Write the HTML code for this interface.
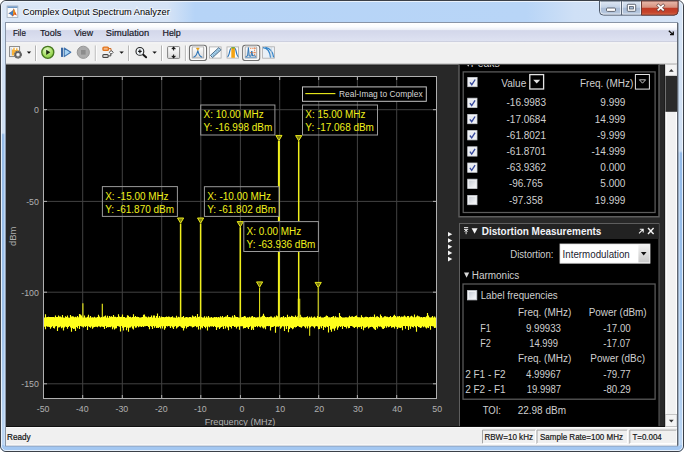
<!DOCTYPE html>
<html><head><meta charset="utf-8"><title>Complex Output Spectrum Analyzer</title>
<style>html,body{margin:0;padding:0;background:#fff;}body{width:684px;height:452px;overflow:hidden;font-family:"Liberation Sans",sans-serif;}svg{display:block;}</style></head>
<body>
<svg width="684" height="452" viewBox="0 0 684 452" font-family="Liberation Sans, sans-serif">
<defs>
<linearGradient id="gTitle" x1="0" x2="1" y1="0" y2="0">
<stop offset="0" stop-color="#dde8f7"/><stop offset="0.245" stop-color="#d5e3f6"/><stop offset="0.285" stop-color="#b6d4f7"/>
<stop offset="0.77" stop-color="#b8d5f7"/><stop offset="0.84" stop-color="#cfe0f6"/><stop offset="1" stop-color="#d6e4f6"/>
</linearGradient>
<linearGradient id="gLeft" x1="0" x2="0" y1="0" y2="1">
<stop offset="0" stop-color="#d9e6f6"/><stop offset="0.258" stop-color="#cfdff3"/><stop offset="0.262" stop-color="#94bbe9"/>
<stop offset="0.7" stop-color="#9cc1eb"/><stop offset="1" stop-color="#bfd8f4"/>
</linearGradient>
<linearGradient id="gRight" x1="0" x2="0" y1="0" y2="1">
<stop offset="0" stop-color="#d6e4f6"/><stop offset="0.30" stop-color="#cfdff3"/><stop offset="0.305" stop-color="#94bbe9"/>
<stop offset="0.7" stop-color="#9cc1eb"/><stop offset="1" stop-color="#bfd8f4"/>
</linearGradient>
<linearGradient id="gMenu" x1="0" x2="0" y1="0" y2="1">
<stop offset="0" stop-color="#ffffff"/><stop offset="0.2" stop-color="#fbfcfe"/><stop offset="0.36" stop-color="#eceff7"/><stop offset="0.40" stop-color="#d3d7ea"/><stop offset="1" stop-color="#dfe3f2"/>
</linearGradient>
<linearGradient id="gBtn" x1="0" x2="0" y1="0" y2="1">
<stop offset="0" stop-color="#dfe8f3"/><stop offset="0.45" stop-color="#c3d2e6"/><stop offset="0.5" stop-color="#a9bcd6"/><stop offset="1" stop-color="#bccce2"/>
</linearGradient>
<linearGradient id="gClose" x1="0" x2="0" y1="0" y2="1">
<stop offset="0" stop-color="#e9bbae"/><stop offset="0.45" stop-color="#d6907e"/><stop offset="0.5" stop-color="#c03a26"/><stop offset="0.8" stop-color="#c5442c"/><stop offset="1" stop-color="#d66c4c"/>
</linearGradient>
<radialGradient id="gPlay" cx="0.4" cy="0.3" r="0.8">
<stop offset="0" stop-color="#e2f8c6"/><stop offset="0.6" stop-color="#a4dd60"/><stop offset="1" stop-color="#78be3a"/>
</radialGradient>
<linearGradient id="gIco" x1="0" x2="0" y1="0" y2="1">
<stop offset="0" stop-color="#ffffff"/><stop offset="1" stop-color="#dcdcdc"/>
</linearGradient>
<linearGradient id="gCombo" x1="0" x2="0" y1="0" y2="1">
<stop offset="0" stop-color="#f2f2f2"/><stop offset="1" stop-color="#c9c9c9"/>
</linearGradient>
<linearGradient id="gChk" x1="0" x2="1" y1="0" y2="1">
<stop offset="0" stop-color="#c9ced6"/><stop offset="1" stop-color="#f6f7f9"/>
</linearGradient>
<clipPath id="cWin"><rect x="0.5" y="0.5" width="683" height="451" rx="5.5"/></clipPath>
<clipPath id="cAx"><rect x="43" y="76" width="394" height="323"/></clipPath>
<clipPath id="cPk"><rect x="460" y="65" width="198" height="10"/></clipPath>
</defs>
<rect width="684" height="452" fill="#ffffff"/>
<g clip-path="url(#cWin)">
<rect width="684" height="452" fill="url(#gTitle)"/>
<rect x="0" y="22" width="6" height="430" fill="url(#gLeft)"/>
<rect x="678" y="22" width="6" height="430" fill="url(#gRight)"/>
<rect x="0" y="445" width="684" height="7" fill="#a3c7f1"/>
<rect x="678.2" y="22" width="1.7" height="424" fill="#d2e6fb" fill-opacity="0.75"/>
<rect x="3.9" y="22" width="1.3" height="424" fill="#d2e6fb" fill-opacity="0.6"/>
</g>
<rect x="0.5" y="0.5" width="683" height="451" rx="5.5" fill="none" stroke="#3b4048"/>
<rect x="1.5" y="1.5" width="681" height="449" rx="4.5" fill="none" stroke="#f2f7fd" stroke-opacity="0.85"/>
<rect x="5.5" y="22.5" width="672" height="423.4" fill="#f0f0f0" stroke="#7f8c9f" stroke-opacity="0.9"/>
<rect x="7.1" y="6.0" width="10.7" height="11.4" fill="#fbfbfb" stroke="#a3afbf" stroke-width="0.9"/>
<rect x="7.5" y="6.3" width="9.9" height="1.7" fill="#7199c6"/>
<path d="M8.4 13.4 L12.4 11 L13.8 8.4 L15.1 11.4 L16.9 15.6 L14.6 14.6 L12.6 16.6 L11 14.6 Z" fill="#d6501c"/>
<path d="M8.4 13.4 L12.4 11 L13.8 8.4 L13.1 13.8 L12.4 16.2 L11 14.6 Z" fill="#3f7fc4"/>
<path d="M13.8 8.4 L14.9 11.6 L14 15 L13.1 13.8 Z" fill="#f3a21a"/>
<text x="22.8" y="15.0" font-size="9.7" fill="#000" textLength="147" lengthAdjust="spacingAndGlyphs" stroke="#ffffff" stroke-opacity="0.45" stroke-width="2.2" style="paint-order:stroke">Complex Output Spectrum Analyzer</text>
<path d="M599.5 1 V11.2 Q599.5 15.1 603.5 15.1 H674 Q678 15.1 678 11.2 V1 Z" fill="url(#gBtn)" stroke="#4d5869"/>
<path d="M641.5 1 V15.1 H674 Q678 15.1 678 11.2 V1 Z" fill="url(#gClose)" stroke="#6e3a34"/>
<path d="M621.5 1 V15.1" stroke="#5b6778" fill="none"/>
<path d="M600.5 1.5 V11.2 Q600.5 14.1 603.5 14.1 H620.5 V1.5 M622.5 1.5 V14.1 H640.5 V1.5" stroke="#ffffff" stroke-opacity="0.6" fill="none"/>
<rect x="606.5" y="8" width="9" height="3.4" rx="1" fill="#ffffff" stroke="#525a66" stroke-width="0.9"/>
<rect x="627.3" y="4.3" width="8.4" height="7" rx="0.8" fill="#ffffff" stroke="#525a66" stroke-width="0.9"/>
<rect x="629.6" y="6.6" width="3.8" height="2.4" fill="#a9bcd6" stroke="#525a66" stroke-width="0.8"/>
<path d="M658.3 5.5 L663.1 9.9 M663.1 5.5 L658.3 9.9" stroke="#5c4444" stroke-opacity="0.8" stroke-width="3.1" stroke-linecap="square" fill="none"/>
<path d="M658.3 5.5 L663.1 9.9 M663.1 5.5 L658.3 9.9" stroke="#ffffff" stroke-width="1.7" stroke-linecap="square" fill="none"/>
<rect x="6" y="23" width="672" height="19" fill="url(#gMenu)"/>
<rect x="6" y="41.6" width="672" height="0.9" fill="#b3b7c6"/>
<text x="13" y="36.4" font-size="9.8" fill="#151525" textLength="12.8" lengthAdjust="spacingAndGlyphs" stroke="#151525" stroke-width="0.18">File</text>
<text x="40" y="36.4" font-size="9.8" fill="#151525" textLength="21.3" lengthAdjust="spacingAndGlyphs" stroke="#151525" stroke-width="0.18">Tools</text>
<text x="74.2" y="36.4" font-size="9.8" fill="#151525" textLength="18.8" lengthAdjust="spacingAndGlyphs" stroke="#151525" stroke-width="0.18">View</text>
<text x="105.8" y="36.4" font-size="9.8" fill="#151525" textLength="43.4" lengthAdjust="spacingAndGlyphs" stroke="#151525" stroke-width="0.18">Simulation</text>
<text x="162.5" y="36.4" font-size="9.8" fill="#151525" textLength="18.3" lengthAdjust="spacingAndGlyphs" stroke="#151525" stroke-width="0.18">Help</text>
<path d="M668.8 30.8 L672.6 34.2 M673.3 31.4 V34.6 H670" stroke="#111" stroke-width="1.3" fill="none"/>
<rect x="6" y="42.5" width="672" height="22" fill="#f0f0f0"/>
<rect x="6" y="42.3" width="672" height="1" fill="#fbfbfb"/>
<path d="M35.5 45.5 V61" stroke="#b2b2b2" stroke-width="1"/>
<path d="M36.5 45.5 V61" stroke="#ffffff" stroke-width="1"/>
<path d="M95.3 45.5 V61" stroke="#b2b2b2" stroke-width="1"/>
<path d="M96.3 45.5 V61" stroke="#ffffff" stroke-width="1"/>
<path d="M128.6 45.5 V61" stroke="#b2b2b2" stroke-width="1"/>
<path d="M129.6 45.5 V61" stroke="#ffffff" stroke-width="1"/>
<path d="M161.5 45.5 V61" stroke="#b2b2b2" stroke-width="1"/>
<path d="M162.5 45.5 V61" stroke="#ffffff" stroke-width="1"/>
<path d="M185.4 45.5 V61" stroke="#b2b2b2" stroke-width="1"/>
<path d="M186.4 45.5 V61" stroke="#ffffff" stroke-width="1"/>
<rect x="9.6" y="46.6" width="10" height="10" fill="#fafafa" stroke="#7c7c7c" stroke-width="0.9"/><path d="M11.2 48 V55.6" stroke="#a9c4e4" stroke-width="0.8"/>
<path d="M12.6 55.6 V49.4 M14 55.6 V47.8 M15.4 55.6 V50 M16.8 55.6 V48.2 M18 55.6 V50" stroke="#f7b23a" stroke-width="1.4"/>
<circle cx="18" cy="54.7" r="3.4" fill="#e2e2e2" stroke="#6a6a6a" stroke-width="1.2" stroke-dasharray="1.7 0.45"/><circle cx="18" cy="54.7" r="2.5" fill="#dcdcdc" stroke="#5c5c5c" stroke-width="1.3"/>
<circle cx="18" cy="54.7" r="0.9" fill="#ffffff"/>
<path d="M26.8 51.4 H31.2 L29 53.8 Z" fill="#111"/>
<circle cx="47.8" cy="52.3" r="6" fill="url(#gPlay)" stroke="#46781f" stroke-width="1.35"/>
<path d="M46.2 49.7 L50.3 52.3 L46.2 54.9 Z" fill="#1d2a12"/>
<rect x="61" y="47.7" width="2" height="9.2" fill="#3b69a3"/>
<path d="M64.2 48 L70.8 52.3 L64.2 56.6 Z" fill="#a6d3f3" stroke="#3d72ae" stroke-width="1.1" stroke-linejoin="round"/>
<circle cx="83.3" cy="52.3" r="6.1" fill="#ababab" stroke="#979797" stroke-width="1"/>
<rect x="81" y="50" width="4.6" height="4.6" fill="#8c8c8c"/>
<path d="M108.6 48.6 H111 V50.8" stroke="#c8641e" stroke-width="1" fill="none"/>
<path d="M108.4 55.9 H110.8 V54" stroke="#444" stroke-width="1" fill="none"/>
<rect x="103" y="47.1" width="5.4" height="3.3" rx="1" fill="#f4b886" stroke="#e3751c" stroke-width="1.4"/>
<rect x="102.8" y="54.6" width="5.4" height="2.8" rx="1" fill="#ffffff" stroke="#444" stroke-width="1.1"/>
<path d="M109.4 52.3 L110.6 50.9 H112 L113.2 52.3 L112 53.7 H110.6 Z" fill="#ffffff" stroke="#4a4a4a" stroke-width="0.9"/>
<path d="M119.39999999999999 51.4 H123.8 L121.6 53.8 Z" fill="#111"/>
<path d="M143 54.5 L146.1 57.3" stroke="#181818" stroke-width="2" stroke-linecap="round"/>
<circle cx="139.9" cy="51.4" r="3.9" fill="#f1f6fa" stroke="#222" stroke-width="1.1"/>
<path d="M138.1 51.4 H141.7 M139.9 49.6 V53.2" stroke="#181818" stroke-width="1.2"/>
<path d="M152.4 51.4 H156.79999999999998 L154.6 53.8 Z" fill="#111"/>
<rect x="167.6" y="46.6" width="12" height="11.8" rx="0.8" fill="url(#gIco)" stroke="#828282" stroke-width="1"/>
<path d="M173.6 47.3 V50.4 M171.8 49.2 L173.6 47.3 L175.4 49.2 M173.6 57.7 V54.6 M171.8 55.8 L173.6 57.7 L175.4 55.8" stroke="#151515" stroke-width="1.05" fill="none"/>
<rect x="189.5" y="45.2" width="17" height="15.3" rx="2.6" fill="#e9e9e9" stroke="#6f6f6f" stroke-width="1.1"/>
<rect x="190.6" y="46.3" width="14.8" height="13.1" rx="1.8" fill="none" stroke="#ffffff" stroke-width="0.9"/>
<rect x="192.3" y="46.9" width="11.3" height="11" fill="url(#gIco)" stroke="#a9a9a9" stroke-width="0.8"/>
<path d="M193.4 57.2 C196.6 56.4 197.2 53 197.8 50.4 C198.4 53 199 56.4 202.2 57.2" stroke="#2f76b8" stroke-width="1.05" fill="none"/>
<path d="M196.3 48 H199.3 L197.8 50.4 Z" fill="#f2aa14" stroke="#c98408" stroke-width="0.4"/>
<rect x="209.5" y="46.9" width="11.6" height="11.2" fill="#fbfbfb" stroke="#acacac" stroke-width="0.8"/>
<path d="M210.4 55.4 L218.8 47.6 L221 49.8 L212.6 57.6 Z" fill="#a5d2ee" stroke="#41617e" stroke-width="0.9"/>
<path d="M213.2 54.8 l0.9 0.9 M214.8 53.3 l0.9 0.9 M216.4 51.8 l0.9 0.9 M218 50.3 l0.9 0.9" stroke="#41617e" stroke-width="0.6"/>
<rect x="227" y="46.9" width="11.6" height="11.2" fill="#fbfbfb" stroke="#acacac" stroke-width="0.8"/>
<path d="M227.4 56.6 C229.6 56.6 229.4 48.6 231 48.6 M238.4 56.6 C236.2 56.6 236.4 48.6 235 48.6" stroke="#2f76b8" stroke-width="1.2" fill="none"/>
<rect x="231.3" y="47.6" width="3.6" height="10.2" fill="#f5a413"/>
<rect x="231.3" y="47.2" width="3.6" height="1.2" fill="#5aa33a"/>
<rect x="242.7" y="45.2" width="17" height="15.3" rx="2.6" fill="#e9e9e9" stroke="#6f6f6f" stroke-width="1.1"/>
<rect x="243.79999999999998" y="46.3" width="14.8" height="13.1" rx="1.8" fill="none" stroke="#ffffff" stroke-width="0.9"/>
<rect x="245.2" y="46.9" width="11.2" height="11" fill="url(#gIco)" stroke="#a9a9a9" stroke-width="0.8"/>
<path d="M245.4 57.6 H256.4" stroke="#7da8cf" stroke-width="1"/>
<path d="M245.6 56.6 L247.6 56 L248.4 47.6 L249.2 56 L251 56.2 L251.8 51 L252.6 56 L254 55.6 L256 56.4" stroke="#2f76b8" stroke-width="1" fill="none"/>
<path d="M250 48.4 H256 M250 52.6 H256 M254.6 47.4 V56" stroke="#e8763a" stroke-width="0.8" stroke-dasharray="1.4 0.8" fill="none"/>
<rect x="262.6" y="46.8" width="11.8" height="11.4" fill="#e9f0f7" stroke="#acacac" stroke-width="0.8"/>
<path d="M263 47.6 C268 48 270 52 270.6 57.6 M265.4 47.4 C270.8 48.4 273 52.4 273.6 57.4" stroke="#2f82c8" stroke-width="1.3" fill="none"/>
<path d="M271.2 47 V57.8" stroke="#c7cfd8" stroke-width="0.8"/>
<rect x="6" y="64.6" width="672" height="362.4" fill="#282828"/>
<rect x="6" y="64.4" width="672" height="1" fill="#1a1a1a"/>
<rect x="6" y="63.2" width="672" height="1.1" fill="#c6c6c6"/>
<rect x="43.5" y="76.5" width="393.0" height="322.0" fill="#000000"/>
<path d="M82.7 76.5 V398.5" stroke="#424242" stroke-width="1"/>
<path d="M122.3 76.5 V398.5" stroke="#424242" stroke-width="1"/>
<path d="M161.7 76.5 V398.5" stroke="#424242" stroke-width="1"/>
<path d="M200.8 76.5 V398.5" stroke="#424242" stroke-width="1"/>
<path d="M240.4 76.5 V398.5" stroke="#424242" stroke-width="1"/>
<path d="M279.7 76.5 V398.5" stroke="#424242" stroke-width="1"/>
<path d="M318.7 76.5 V398.5" stroke="#424242" stroke-width="1"/>
<path d="M357.4 76.5 V398.5" stroke="#424242" stroke-width="1"/>
<path d="M396.7 76.5 V398.5" stroke="#424242" stroke-width="1"/>
<path d="M43.5 109.7 H436.5" stroke="#424242" stroke-width="1"/>
<path d="M43.5 201.4 H436.5" stroke="#424242" stroke-width="1"/>
<path d="M43.5 292.2 H436.5" stroke="#424242" stroke-width="1"/>
<path d="M43.5 383.8 H436.5" stroke="#424242" stroke-width="1"/>
<path d="M82.7 398.5 v-3.5 M82.7 76.5 v3.5 M122.3 398.5 v-3.5 M122.3 76.5 v3.5 M161.7 398.5 v-3.5 M161.7 76.5 v3.5 M200.8 398.5 v-3.5 M200.8 76.5 v3.5 M240.4 398.5 v-3.5 M240.4 76.5 v3.5 M279.7 398.5 v-3.5 M279.7 76.5 v3.5 M318.7 398.5 v-3.5 M318.7 76.5 v3.5 M357.4 398.5 v-3.5 M357.4 76.5 v3.5 M396.7 398.5 v-3.5 M396.7 76.5 v3.5 M43.5 109.7 h3.5 M436.5 109.7 h-3.5 M43.5 201.4 h3.5 M436.5 201.4 h-3.5 M43.5 292.2 h3.5 M436.5 292.2 h-3.5 M43.5 383.8 h3.5 M436.5 383.8 h-3.5" stroke="#b0b0b0" stroke-width="1" fill="none"/>
<g clip-path="url(#cAx)">
<path d="M44.5 317.4V326.8M45.5 314.3V329.3M46.5 317.2V326.2M47.5 317.1V326.7M48.5 316.7V326.7M49.5 317.1V327.0M50.5 316.9V328.8M51.5 317.0V327.2M52.5 317.0V326.3M53.5 317.1V328.0M54.5 317.2V328.4M55.5 315.4V326.4M56.5 317.1V326.0M57.5 316.9V331.0M58.5 315.6V327.4M59.5 316.4V327.2M60.5 316.5V326.6M61.5 317.2V328.2M62.5 315.0V327.5M63.5 317.4V330.4M64.5 317.7V327.6M65.5 316.3V326.6M66.5 317.1V326.9M67.5 315.5V328.7M68.5 317.6V327.1M69.5 317.7V326.1M70.5 315.1V327.6M71.5 316.4V331.8M72.5 316.3V328.1M73.5 316.4V329.1M74.5 317.2V328.7M75.5 316.8V331.0M76.5 317.2V326.9M77.5 316.1V328.2M78.5 317.2V326.0M79.5 314.1V329.1M80.5 314.5V326.1M81.5 315.4V326.4M82.5 317.2V326.7M83.5 317.5V327.4M84.5 315.5V326.2M85.5 317.6V327.1M86.5 317.4V326.0M87.5 316.7V329.9M88.5 314.8V326.2M89.5 317.6V327.0M90.5 315.9V327.8M91.5 317.6V326.6M92.5 317.3V328.7M93.5 317.4V327.4M94.5 316.8V326.9M95.5 317.4V326.7M96.5 317.5V326.8M97.5 317.1V327.2M98.5 314.7V326.3M99.5 316.6V326.6M100.5 317.5V327.2M101.5 316.9V326.6M102.5 316.8V326.8M103.5 316.7V326.9M104.5 316.3V329.1M105.5 315.6V326.0M106.5 317.5V328.0M107.5 315.8V326.9M108.5 317.7V327.3M109.5 315.9V327.0M110.5 316.7V327.2M111.5 316.3V326.5M112.5 317.0V329.2M113.5 315.1V327.4M114.5 316.8V329.4M115.5 316.7V328.5M116.5 317.3V328.3M117.5 316.9V326.1M118.5 314.2V326.3M119.5 316.4V326.8M120.5 316.9V331.5M121.5 316.7V326.1M122.5 314.6V327.8M123.5 317.0V330.6M124.5 316.9V327.2M125.5 317.7V326.9M126.5 317.5V330.2M127.5 315.3V327.7M128.5 315.7V331.7M129.5 316.9V327.7M130.5 316.7V327.4M131.5 317.5V326.4M132.5 317.0V328.6M133.5 314.3V329.6M134.5 317.0V326.2M135.5 316.0V327.8M136.5 317.1V327.4M137.5 316.7V326.1M138.5 316.9V327.2M139.5 317.4V326.4M140.5 317.4V326.5M141.5 317.3V327.1M142.5 317.0V326.2M143.5 314.7V327.0M144.5 314.5V326.2M145.5 316.4V326.2M146.5 316.8V325.9M147.5 317.5V326.0M148.5 316.5V327.0M149.5 317.2V329.3M150.5 317.0V326.0M151.5 315.6V326.8M152.5 317.5V329.0M153.5 315.5V326.0M154.5 315.6V327.7M155.5 317.7V326.3M156.5 316.0V327.9M157.5 313.4V327.7M158.5 317.7V327.9M159.5 316.0V327.0M160.5 317.5V328.6M161.5 316.4V326.2M162.5 316.9V328.6M163.5 317.1V326.3M164.5 317.2V329.7M165.5 316.9V328.2M166.5 316.4V326.1M167.5 317.1V326.6M168.5 316.4V326.1M169.5 316.8V326.3M170.5 317.3V328.1M171.5 317.1V326.2M172.5 316.3V327.6M173.5 317.4V328.9M174.5 317.5V326.8M175.5 317.7V326.0M176.5 315.8V328.6M177.5 317.4V327.5M178.5 316.8V326.8M179.5 317.2V326.1M180.5 316.9V326.4M181.5 317.3V327.4M182.5 317.1V328.1M183.5 316.0V330.4M184.5 317.7V328.3M185.5 317.2V326.3M186.5 317.1V328.6M187.5 317.2V327.1M188.5 317.4V326.8M189.5 316.9V325.9M190.5 317.1V326.2M191.5 317.4V326.5M192.5 315.5V327.4M193.5 316.5V327.0M194.5 316.8V326.4M195.5 316.1V326.0M196.5 317.6V327.2M197.5 314.0V326.8M198.5 317.1V329.4M199.5 316.6V325.9M200.5 315.8V329.5M201.5 316.9V327.6M202.5 317.4V328.3M203.5 317.4V326.1M204.5 316.2V327.1M205.5 317.7V328.3M206.5 316.4V326.8M207.5 317.4V330.6M208.5 316.1V326.5M209.5 317.6V327.2M210.5 317.6V326.2M211.5 316.9V326.5M212.5 317.7V326.3M213.5 317.4V326.9M214.5 316.9V325.9M215.5 317.3V327.0M216.5 316.9V329.9M217.5 317.5V327.6M218.5 317.0V327.3M219.5 317.5V329.0M220.5 316.3V327.7M221.5 317.3V326.9M222.5 316.0V326.4M223.5 317.4V329.1M224.5 317.1V326.1M225.5 316.4V328.4M226.5 316.5V326.5M227.5 315.0V327.4M228.5 317.0V330.2M229.5 316.9V326.5M230.5 317.2V327.0M231.5 317.6V328.6M232.5 315.8V326.0M233.5 317.5V326.0M234.5 315.0V327.0M235.5 316.5V326.7M236.5 317.1V328.5M237.5 316.9V326.8M238.5 317.6V326.6M239.5 317.7V329.7M240.5 315.3V326.3M241.5 317.3V326.3M242.5 316.9V326.3M243.5 316.8V328.4M244.5 316.1V328.1M245.5 316.4V327.9M246.5 317.7V326.9M247.5 317.2V327.4M248.5 317.5V329.0M249.5 316.7V327.1M250.5 317.4V326.2M251.5 316.6V330.1M252.5 316.1V328.4M253.5 317.2V329.9M254.5 317.1V326.7M255.5 317.4V327.1M256.5 317.6V326.1M257.5 317.3V327.3M258.5 317.3V326.1M259.5 316.1V326.7M260.5 317.3V327.5M261.5 316.7V326.3M262.5 315.7V327.6M263.5 313.8V328.5M264.5 315.8V327.4M265.5 317.0V329.3M266.5 317.3V326.3M267.5 317.1V325.9M268.5 317.2V326.3M269.5 317.0V326.1M270.5 316.4V330.5M271.5 316.4V327.2M272.5 317.5V327.1M273.5 317.4V326.8M274.5 316.6V326.1M275.5 317.3V332.7M276.5 315.6V326.7M277.5 316.2V326.6M278.5 316.6V326.8M279.5 317.5V326.0M280.5 317.5V328.8M281.5 317.1V327.6M282.5 317.2V326.2M283.5 316.1V326.5M284.5 317.5V330.9M285.5 317.1V326.2M286.5 317.5V329.0M287.5 314.8V326.1M288.5 317.1V332.3M289.5 316.4V328.9M290.5 316.9V327.5M291.5 315.7V327.9M292.5 316.3V329.3M293.5 316.7V328.5M294.5 317.0V327.1M295.5 315.6V327.6M296.5 316.9V327.1M297.5 316.2V326.0M298.5 317.0V326.3M299.5 317.3V327.1M300.5 314.7V327.2M301.5 316.8V327.8M302.5 317.2V326.5M303.5 317.6V325.9M304.5 317.2V326.8M305.5 317.2V328.2M306.5 316.9V326.4M307.5 316.2V328.5M308.5 317.7V326.2M309.5 316.7V327.9M310.5 317.6V327.2M311.5 316.5V326.2M312.5 317.7V326.2M313.5 317.2V326.8M314.5 316.4V328.3M315.5 317.6V326.4M316.5 317.7V326.1M317.5 315.9V326.5M318.5 317.0V329.2M319.5 316.9V329.0M320.5 316.5V326.5M321.5 317.5V328.3M322.5 317.6V326.1M323.5 317.6V330.0M324.5 317.0V326.9M325.5 316.5V327.8M326.5 315.5V326.5M327.5 316.0V326.9M328.5 317.3V332.4M329.5 317.2V326.0M330.5 317.5V329.8M331.5 317.1V331.8M332.5 316.8V328.8M333.5 316.0V328.7M334.5 317.5V330.7M335.5 316.3V328.3M336.5 317.3V326.4M337.5 317.2V329.8M338.5 317.5V327.5M339.5 313.1V326.0M340.5 315.9V327.0M341.5 316.9V326.2M342.5 317.4V328.9M343.5 317.6V325.9M344.5 317.5V326.9M345.5 317.3V327.1M346.5 317.3V328.5M347.5 317.4V326.4M348.5 317.3V328.2M349.5 315.8V328.1M350.5 316.9V326.1M351.5 316.6V325.9M352.5 316.3V326.4M353.5 317.1V327.2M354.5 316.8V328.0M355.5 315.9V327.0M356.5 315.4V326.7M357.5 317.1V328.4M358.5 317.2V327.0M359.5 317.2V327.2M360.5 317.6V326.7M361.5 315.2V329.1M362.5 317.0V326.3M363.5 317.4V330.2M364.5 317.2V327.8M365.5 316.7V327.7M366.5 316.7V326.9M367.5 317.0V326.5M368.5 317.4V328.5M369.5 316.9V327.4M370.5 316.7V326.9M371.5 317.1V326.8M372.5 316.8V327.1M373.5 317.0V328.2M374.5 314.6V329.3M375.5 317.2V329.9M376.5 316.4V326.9M377.5 316.3V328.4M378.5 317.0V326.3M379.5 317.7V326.8M380.5 314.5V326.4M381.5 316.1V327.2M382.5 317.4V328.7M383.5 317.3V328.9M384.5 316.3V328.0M385.5 316.2V326.3M386.5 316.7V327.8M387.5 316.8V326.2M388.5 317.2V327.3M389.5 317.1V326.8M390.5 315.9V325.9M391.5 317.3V327.7M392.5 317.1V327.3M393.5 315.7V327.0M394.5 314.8V328.4M395.5 316.1V326.6M396.5 317.2V326.9M397.5 316.3V328.9M398.5 316.5V327.4M399.5 316.1V327.8M400.5 317.2V327.9M401.5 316.6V327.4M402.5 316.8V330.3M403.5 316.4V326.0M404.5 315.5V326.0M405.5 316.6V328.7M406.5 317.3V326.1M407.5 316.1V326.3M408.5 316.1V330.1M409.5 317.5V326.2M410.5 316.5V328.8M411.5 315.8V326.4M412.5 316.4V326.9M413.5 317.2V327.4M414.5 314.6V326.1M415.5 317.2V327.2M416.5 316.4V331.8M417.5 315.5V326.1M418.5 316.3V327.0M419.5 316.4V327.2M420.5 317.2V328.1M421.5 317.1V327.5M422.5 317.6V326.3M423.5 317.1V327.3M424.5 316.9V326.4M425.5 317.2V327.5M426.5 316.3V328.5M427.5 313.1V327.6M428.5 315.4V328.1M429.5 317.2V326.3M430.5 317.6V329.7M431.5 317.2V326.1M432.5 315.9V326.2M433.5 317.6V326.4M434.5 316.6V328.1M435.5 317.4V327.7M436.5 315.9V328.0" stroke="#ffff1c" stroke-width="1.15" fill="none"/>
<path d="M82.9 303.2 V318 M102.3 303.8 V318" stroke="#f0f01c" stroke-width="1.1"/>
<path d="M299 298.7 V318" stroke="#a8a814" stroke-width="2.6"/>
<path d="M309.7 327 V335.8" stroke="#f0f01c" stroke-width="1"/>
<path d="M278.9 141.0 V320" stroke="#f0f01c" stroke-width="2.0"/>
<path d="M298.7 141.2 V320" stroke="#f0f01c" stroke-width="1.5"/>
<path d="M200.6 223.6 V320" stroke="#f0f01c" stroke-width="1.5"/>
<path d="M180.6 223.6 V320" stroke="#f0f01c" stroke-width="1.5"/>
<path d="M240.3 227.2 V320" stroke="#f0f01c" stroke-width="1.6"/>
<path d="M259.6 287.5 V320" stroke="#f0f01c" stroke-width="1.0"/>
<path d="M318.2 288 V320" stroke="#f0f01c" stroke-width="1.0"/>
<path d="M275.79999999999995 135.4 H282.0 L278.9 140.6 Z" fill="#7d7d10" stroke="#f0f01c" stroke-width="0.95" stroke-linejoin="miter"/>
<path d="M295.59999999999997 135.6 H301.8 L298.7 140.79999999999998 Z" fill="#7d7d10" stroke="#f0f01c" stroke-width="0.95" stroke-linejoin="miter"/>
<path d="M197.5 218.0 H203.7 L200.6 223.2 Z" fill="#7d7d10" stroke="#f0f01c" stroke-width="0.95" stroke-linejoin="miter"/>
<path d="M177.5 218.0 H183.7 L180.6 223.2 Z" fill="#7d7d10" stroke="#f0f01c" stroke-width="0.95" stroke-linejoin="miter"/>
<path d="M237.20000000000002 221.6 H243.4 L240.3 226.79999999999998 Z" fill="#7d7d10" stroke="#f0f01c" stroke-width="0.95" stroke-linejoin="miter"/>
<path d="M256.5 281.9 H262.70000000000005 L259.6 287.1 Z" fill="#7d7d10" stroke="#f0f01c" stroke-width="0.95" stroke-linejoin="miter"/>
<path d="M315.09999999999997 282.4 H321.3 L318.2 287.6 Z" fill="#7d7d10" stroke="#f0f01c" stroke-width="0.95" stroke-linejoin="miter"/>
</g>
<rect x="43.5" y="76.5" width="393.0" height="322.0" fill="none" stroke="#b0b0b0" stroke-width="1"/>
<rect x="302.5" y="86.9" width="123.8" height="14.4" fill="#000" stroke="#c4c4c4" stroke-width="1"/>
<path d="M305.3 93.6 H335.4" stroke="#f0f01c" stroke-width="1.1"/>
<text x="339" y="97.1" font-size="8.8" fill="#d6d6d6" textLength="83.6" lengthAdjust="spacingAndGlyphs" >Real-Imag to Complex</text>
<clipPath id="cTips"><rect x="102.4" y="186.6" width="75" height="29.8"/><rect x="204.4" y="186.7" width="74.6" height="29.7"/><rect x="200.7" y="105.0" width="74.2" height="30"/><rect x="302.5" y="105.0" width="75" height="30"/><rect x="243.8" y="221.6" width="74.6" height="29.9"/></clipPath>
<rect x="102.4" y="186.6" width="75" height="29.8" fill="#000"/>
<rect x="204.4" y="186.7" width="74.6" height="29.7" fill="#000"/>
<rect x="200.7" y="105.0" width="74.2" height="30" fill="#000"/>
<rect x="302.5" y="105.0" width="75" height="30" fill="#000"/>
<rect x="243.8" y="221.6" width="74.6" height="29.9" fill="#000"/>
<path d="M82.70 76.5V398.5M122.30 76.5V398.5M161.70 76.5V398.5M200.80 76.5V398.5M240.40 76.5V398.5M279.70 76.5V398.5M318.70 76.5V398.5M357.45 76.5V398.5M396.70 76.5V398.5M43.5 109.70H436.5M43.5 201.40H436.5M43.5 292.20H436.5M43.5 383.80H436.5" stroke="#424242" stroke-width="1" fill="none" clip-path="url(#cTips)"/>
<rect x="102.4" y="186.6" width="75" height="29.8" fill="none" stroke="#9a9a9a" stroke-width="1"/>
<text x="105.2" y="200.0" font-size="10" fill="#f0f01c" textLength="63.4" lengthAdjust="spacingAndGlyphs" >X: -15.00 MHz</text>
<text x="105.2" y="212.8" font-size="10" fill="#f0f01c" textLength="68.9" lengthAdjust="spacingAndGlyphs" >Y: -61.870 dBm</text>
<rect x="204.4" y="186.7" width="74.6" height="29.7" fill="none" stroke="#9a9a9a" stroke-width="1"/>
<text x="207.2" y="200.1" font-size="10" fill="#f0f01c" textLength="63.9" lengthAdjust="spacingAndGlyphs" >X: -10.00 MHz</text>
<text x="207.2" y="212.9" font-size="10" fill="#f0f01c" textLength="68.9" lengthAdjust="spacingAndGlyphs" >Y: -61.802 dBm</text>
<rect x="200.7" y="105.0" width="74.2" height="30" fill="none" stroke="#9a9a9a" stroke-width="1"/>
<text x="203.5" y="118.4" font-size="10" fill="#f0f01c" textLength="60.2" lengthAdjust="spacingAndGlyphs" >X: 10.00 MHz</text>
<text x="203.5" y="131.2" font-size="10" fill="#f0f01c" textLength="68.8" lengthAdjust="spacingAndGlyphs" >Y: -16.998 dBm</text>
<rect x="302.5" y="105.0" width="75" height="30" fill="none" stroke="#9a9a9a" stroke-width="1"/>
<text x="305.3" y="118.4" font-size="10" fill="#f0f01c" textLength="60.2" lengthAdjust="spacingAndGlyphs" >X: 15.00 MHz</text>
<text x="305.3" y="131.2" font-size="10" fill="#f0f01c" textLength="68.6" lengthAdjust="spacingAndGlyphs" >Y: -17.068 dBm</text>
<rect x="243.8" y="221.6" width="74.6" height="29.9" fill="none" stroke="#9a9a9a" stroke-width="1"/>
<text x="246.6" y="235.0" font-size="10" fill="#f0f01c" textLength="54.6" lengthAdjust="spacingAndGlyphs" >X: 0.00 MHz</text>
<text x="246.6" y="247.8" font-size="10" fill="#f0f01c" textLength="68.8" lengthAdjust="spacingAndGlyphs" >Y: -63.936 dBm</text>
<text x="43.1" y="412.3" font-size="8.8" fill="#b0b0b0" text-anchor="middle" >-50</text>
<text x="82.3" y="412.3" font-size="8.8" fill="#b0b0b0" text-anchor="middle" >-40</text>
<text x="121.9" y="412.3" font-size="8.8" fill="#b0b0b0" text-anchor="middle" >-30</text>
<text x="161.3" y="412.3" font-size="8.8" fill="#b0b0b0" text-anchor="middle" >-20</text>
<text x="200.4" y="412.3" font-size="8.8" fill="#b0b0b0" text-anchor="middle" >-10</text>
<text x="241.9" y="412.3" font-size="8.8" fill="#b0b0b0" text-anchor="middle" >0</text>
<text x="280.2" y="412.3" font-size="8.8" fill="#b0b0b0" text-anchor="middle" >10</text>
<text x="319.2" y="412.3" font-size="8.8" fill="#b0b0b0" text-anchor="middle" >20</text>
<text x="357.9" y="412.3" font-size="8.8" fill="#b0b0b0" text-anchor="middle" >30</text>
<text x="397.2" y="412.3" font-size="8.8" fill="#b0b0b0" text-anchor="middle" >40</text>
<text x="437.2" y="412.3" font-size="8.8" fill="#b0b0b0" text-anchor="middle" >50</text>
<text x="38.9" y="113.0" font-size="8.8" fill="#b0b0b0" text-anchor="end" >0</text>
<text x="38.9" y="204.7" font-size="8.8" fill="#b0b0b0" text-anchor="end" >-50</text>
<text x="38.9" y="295.5" font-size="8.8" fill="#b0b0b0" text-anchor="end" >-100</text>
<text x="38.9" y="387.1" font-size="8.8" fill="#b0b0b0" text-anchor="end" >-150</text>
<text x="204.7" y="424.8" font-size="9.2" fill="#b0b0b0" textLength="70.6" lengthAdjust="spacingAndGlyphs" >Frequency (MHz)</text>
<text transform="translate(16.3 246) rotate(-90)" font-size="9.2" fill="#b0b0b0" textLength="19.3" lengthAdjust="spacingAndGlyphs">dBm</text>
<path d="M448 232.0 L452.3 234.3 L448 236.6 Z" fill="#f4f4f4"/>
<path d="M448 238.2 L452.3 240.5 L448 242.8 Z" fill="#f4f4f4"/>
<path d="M448 244.4 L452.3 246.7 L448 249.0 Z" fill="#f4f4f4"/>
<path d="M448 250.6 L452.3 252.9 L448 255.2 Z" fill="#f4f4f4"/>
<path d="M448 256.8 L452.3 259.1 L448 261.4 Z" fill="#f4f4f4"/>
<rect x="459" y="64.6" width="200" height="152.4" fill="#000" stroke="none"/>
<path d="M459 64.6 V216.8 H659 V64.6" stroke="#5e5e5e" stroke-width="1.4" fill="none"/>
<g clip-path="url(#cPk)">
<path d="M465.8 60 H470.6 L468.2 64.6 Z" transform="translate(0,2.2)" fill="#d8d8d8"/>
<text x="470.8" y="67.0" font-size="10" fill="#d4d4d4" textLength="29" lengthAdjust="spacingAndGlyphs" >Peaks</text>
</g>
<rect x="463.2" y="71.9" width="191.9" height="140.6" fill="none" stroke="#5c5c5c" stroke-width="1.25"/>
<rect x="467.8" y="77.4" width="9.3" height="9.3" fill="#f4f5f8" stroke="#c9ccd2" stroke-width="0.8"/>
<rect x="469.3" y="78.9" width="6.3" height="6.3" fill="#e8ebf1"/>
<path d="M470.0 82.3 L471.8 84.7 L475.2 79.5" stroke="#36489c" stroke-width="1.35" fill="none"/>
<text x="501.3" y="87.0" font-size="10" fill="#cfcfcf" textLength="25" lengthAdjust="spacingAndGlyphs" >Value</text>
<rect x="529.8" y="74.6" width="13.8" height="14.4" fill="#000" stroke="#e4e4e4" stroke-width="1.3"/>
<path d="M533.2 79.8 H540.2 L536.7 83.6 Z" fill="#e0e0e0"/>
<text x="580" y="87.0" font-size="10" fill="#cfcfcf" textLength="53.3" lengthAdjust="spacingAndGlyphs" >Freq. (MHz)</text>
<rect x="635.4" y="74.5" width="14" height="14.6" fill="#000" stroke="#e4e4e4" stroke-width="1"/>
<path d="M639.4 79.8 H645.6 L642.5 83.2 Z" fill="none" stroke="#d8d8d8" stroke-width="0.9"/>
<rect x="467.7" y="98.2" width="9.3" height="9.3" fill="#f4f5f8" stroke="#c9ccd2" stroke-width="0.8"/>
<rect x="469.2" y="99.7" width="6.3" height="6.3" fill="#e8ebf1"/>
<path d="M469.9 103.1 L471.7 105.5 L475.1 100.3" stroke="#36489c" stroke-width="1.35" fill="none"/>
<text x="546" y="106.3" font-size="10" fill="#cfcfcf" text-anchor="end" >-16.9983</text>
<text x="625.4" y="106.3" font-size="10" fill="#cfcfcf" text-anchor="end" >9.999</text>
<rect x="467.7" y="114.4" width="9.3" height="9.3" fill="#f4f5f8" stroke="#c9ccd2" stroke-width="0.8"/>
<rect x="469.2" y="115.9" width="6.3" height="6.3" fill="#e8ebf1"/>
<path d="M469.9 119.3 L471.7 121.7 L475.1 116.5" stroke="#36489c" stroke-width="1.35" fill="none"/>
<text x="546" y="122.5" font-size="10" fill="#cfcfcf" text-anchor="end" >-17.0684</text>
<text x="625.4" y="122.5" font-size="10" fill="#cfcfcf" text-anchor="end" >14.999</text>
<rect x="467.7" y="130.6" width="9.3" height="9.3" fill="#f4f5f8" stroke="#c9ccd2" stroke-width="0.8"/>
<rect x="469.2" y="132.1" width="6.3" height="6.3" fill="#e8ebf1"/>
<path d="M469.9 135.5 L471.7 137.9 L475.1 132.7" stroke="#36489c" stroke-width="1.35" fill="none"/>
<text x="546" y="138.7" font-size="10" fill="#cfcfcf" text-anchor="end" >-61.8021</text>
<text x="625.4" y="138.7" font-size="10" fill="#cfcfcf" text-anchor="end" >-9.999</text>
<rect x="467.7" y="146.8" width="9.3" height="9.3" fill="#f4f5f8" stroke="#c9ccd2" stroke-width="0.8"/>
<rect x="469.2" y="148.3" width="6.3" height="6.3" fill="#e8ebf1"/>
<path d="M469.9 151.7 L471.7 154.1 L475.1 148.9" stroke="#36489c" stroke-width="1.35" fill="none"/>
<text x="546" y="154.9" font-size="10" fill="#cfcfcf" text-anchor="end" >-61.8701</text>
<text x="625.4" y="154.9" font-size="10" fill="#cfcfcf" text-anchor="end" >-14.999</text>
<rect x="467.7" y="163.0" width="9.3" height="9.3" fill="#f4f5f8" stroke="#c9ccd2" stroke-width="0.8"/>
<rect x="469.2" y="164.5" width="6.3" height="6.3" fill="#e8ebf1"/>
<path d="M469.9 167.9 L471.7 170.3 L475.1 165.1" stroke="#36489c" stroke-width="1.35" fill="none"/>
<text x="546" y="171.1" font-size="10" fill="#cfcfcf" text-anchor="end" >-63.9362</text>
<text x="625.4" y="171.1" font-size="10" fill="#cfcfcf" text-anchor="end" >0.000</text>
<rect x="467.7" y="179.2" width="9.3" height="9.3" fill="#f2f3f5" stroke="#c9ccd2" stroke-width="0.8"/>
<rect x="469.1" y="180.6" width="6.5" height="6.5" fill="url(#gChk)"/>
<text x="542.8" y="187.3" font-size="10" fill="#cfcfcf" text-anchor="end" >-96.765</text>
<text x="625.4" y="187.3" font-size="10" fill="#cfcfcf" text-anchor="end" >5.000</text>
<rect x="467.7" y="195.4" width="9.3" height="9.3" fill="#f2f3f5" stroke="#c9ccd2" stroke-width="0.8"/>
<rect x="469.1" y="196.8" width="6.5" height="6.5" fill="url(#gChk)"/>
<text x="542.8" y="203.5" font-size="10" fill="#cfcfcf" text-anchor="end" >-97.358</text>
<text x="625.4" y="203.5" font-size="10" fill="#cfcfcf" text-anchor="end" >19.999</text>
<path d="M664.9 64.6 V427" stroke="#181818" stroke-width="1"/>
<rect x="459.5" y="223.5" width="199.5" height="204" fill="#000" stroke="#5e5e5e" stroke-width="1"/>
<rect x="460" y="224" width="198.5" height="15" fill="#222222"/>
<path d="M464 227.6 H468.2 M464 229.4 H468.2 M466.1 230 V234.2 M464.6 231.6 L466.1 230 L467.6 231.6" stroke="#f0f0f0" stroke-width="0.95" fill="none"/>
<path d="M471.6 228.2 H477.6 L474.6 233.8 Z" fill="#f4f4f4"/>
<text x="481.8" y="234.8" font-size="10.6" fill="#f2f4f8" textLength="119.6" lengthAdjust="spacingAndGlyphs" font-weight="bold" >Distortion Measurements</text>
<path d="M639 233.4 L642.8 229.6 M639.8 229.2 H643.2 V232.6" stroke="#f0f0f0" stroke-width="1.1" fill="none"/>
<path d="M648 228 L653.6 234 M653.6 228 L648 234" stroke="#f4f4f4" stroke-width="1.4" fill="none"/>
<text x="510.2" y="257.6" font-size="10" fill="#cfcfcf" textLength="43.3" lengthAdjust="spacingAndGlyphs" >Distortion:</text>
<rect x="560" y="244" width="90" height="19.2" fill="#ffffff" stroke="#dcdcdc" stroke-width="0.8"/>
<rect x="638.4" y="245" width="11" height="17.4" fill="url(#gCombo)"/>
<path d="M640.9 252 H646.5 L643.7 255.4 Z" fill="#111"/>
<text x="562.6" y="257.5" font-size="10" fill="#1c1c30" textLength="67.2" lengthAdjust="spacingAndGlyphs" >Intermodulation</text>
<path d="M464 272.4 H469.2 L466.6 277.8 Z" fill="#d8d8d8"/>
<text x="471.8" y="278.5" font-size="10" fill="#cfcfcf" textLength="47.5" lengthAdjust="spacingAndGlyphs" >Harmonics</text>
<rect x="463" y="284" width="192.1" height="115.2" fill="none" stroke="#5c5c5c" stroke-width="1.25"/>
<rect x="467.5" y="290.6" width="9.3" height="9.3" fill="#f2f3f5" stroke="#c9ccd2" stroke-width="0.8"/>
<rect x="468.9" y="292.0" width="6.5" height="6.5" fill="url(#gChk)"/>
<text x="480.7" y="298.7" font-size="10" fill="#cfcfcf" textLength="77" lengthAdjust="spacingAndGlyphs" >Label frequencies</text>
<text x="518" y="316.3" font-size="10" fill="#cfcfcf" textLength="53.3" lengthAdjust="spacingAndGlyphs" >Freq. (MHz)</text>
<text x="588.7" y="316.3" font-size="10" fill="#cfcfcf" textLength="58" lengthAdjust="spacingAndGlyphs" >Power (dBm)</text>
<text x="480.2" y="331.6" font-size="10" fill="#cfcfcf" textLength="10.6" lengthAdjust="spacingAndGlyphs" >F1</text>
<text x="543.5" y="331.6" font-size="10" fill="#cfcfcf" textLength="35" lengthAdjust="spacingAndGlyphs" text-anchor="middle" >9.99933</text>
<text x="617" y="331.6" font-size="10" fill="#cfcfcf" textLength="27.5" lengthAdjust="spacingAndGlyphs" text-anchor="middle" >-17.00</text>
<text x="480.2" y="346.8" font-size="10" fill="#cfcfcf" textLength="10.6" lengthAdjust="spacingAndGlyphs" >F2</text>
<text x="543.6" y="346.8" font-size="10" fill="#cfcfcf" textLength="28.7" lengthAdjust="spacingAndGlyphs" text-anchor="middle" >14.999</text>
<text x="616.8" y="346.8" font-size="10" fill="#cfcfcf" textLength="27" lengthAdjust="spacingAndGlyphs" text-anchor="middle" >-17.07</text>
<text x="518" y="362.4" font-size="10" fill="#cfcfcf" textLength="53.3" lengthAdjust="spacingAndGlyphs" >Freq. (MHz)</text>
<text x="590.3" y="362.4" font-size="10" fill="#cfcfcf" textLength="54.7" lengthAdjust="spacingAndGlyphs" >Power (dBc)</text>
<text x="465.2" y="377.8" font-size="10" fill="#cfcfcf" textLength="40.5" lengthAdjust="spacingAndGlyphs" >2 F1 - F2</text>
<text x="543.5" y="377.8" font-size="10" fill="#cfcfcf" textLength="35" lengthAdjust="spacingAndGlyphs" text-anchor="middle" >4.99967</text>
<text x="617" y="377.8" font-size="10" fill="#cfcfcf" textLength="27.5" lengthAdjust="spacingAndGlyphs" text-anchor="middle" >-79.77</text>
<text x="465.2" y="393.2" font-size="10" fill="#cfcfcf" textLength="40.5" lengthAdjust="spacingAndGlyphs" >2 F2 - F1</text>
<text x="543.9" y="393.2" font-size="10" fill="#cfcfcf" textLength="34.4" lengthAdjust="spacingAndGlyphs" text-anchor="middle" >19.9987</text>
<text x="617" y="393.2" font-size="10" fill="#cfcfcf" textLength="27.5" lengthAdjust="spacingAndGlyphs" text-anchor="middle" >-80.29</text>
<text x="482.7" y="414.2" font-size="10" fill="#cfcfcf" textLength="18.3" lengthAdjust="spacingAndGlyphs" >TOI:</text>
<text x="517.7" y="414.2" font-size="10" fill="#cfcfcf" textLength="48.3" lengthAdjust="spacingAndGlyphs" >22.98 dBm</text>
<rect x="665.4" y="64.6" width="11.6" height="362.4" fill="#f1f1f1"/>
<rect x="665.4" y="64.6" width="1.3" height="362.4" fill="#ffffff"/>
<rect x="675.8" y="64.6" width="1.2" height="362.4" fill="#ffffff"/>
<rect x="665.4" y="75.6" width="11.6" height="36.2" fill="#2b2b2b"/>
<rect x="665.4" y="64.6" width="11.6" height="11" fill="#f3f3f3" stroke="#d0d0d0" stroke-width="0.6"/>
<path d="M668.9 71.8 L671.3 69 L673.7 71.8 Z" fill="#333"/>
<rect x="665.4" y="414.4" width="11.6" height="12.2" fill="#f3f3f3" stroke="#b8b8b8" stroke-width="0.8"/>
<path d="M668.9 419.8 L671.3 422.6 L673.7 419.8 Z" fill="#333"/>
<rect x="6" y="427" width="671" height="17.6" fill="#f0f0f0"/>
<rect x="6" y="444.5" width="671" height="1" fill="#fdfdfd"/>
<rect x="6" y="426.1" width="659" height="0.9" fill="#0e0e0e"/>
<rect x="6" y="427" width="672" height="1" fill="#fafafa"/>
<text x="7.1" y="440.1" font-size="8.8" fill="#111" textLength="23.6" lengthAdjust="spacingAndGlyphs" stroke="#111" stroke-width="0.2">Ready</text>
<path d="M482.5 443.6 V430.1 H535.6" stroke="#a6a6a6" stroke-width="1" fill="none"/>
<path d="M482.5 443.6 H535.6 V430.1" stroke="#ffffff" stroke-width="1" fill="none"/>
<path d="M537 443.6 V430.1 H627.4" stroke="#a6a6a6" stroke-width="1" fill="none"/>
<path d="M537 443.6 H627.4 V430.1" stroke="#ffffff" stroke-width="1" fill="none"/>
<path d="M629.8 443.6 V430.1 H676.8" stroke="#a6a6a6" stroke-width="1" fill="none"/>
<path d="M629.8 443.6 H676.8 V430.1" stroke="#ffffff" stroke-width="1" fill="none"/>
<text x="484.4" y="440.4" font-size="8.8" fill="#151515" textLength="48.6" lengthAdjust="spacingAndGlyphs" stroke="#151515" stroke-width="0.2">RBW=10 kHz</text>
<text x="540" y="440.4" font-size="8.8" fill="#151515" textLength="83" lengthAdjust="spacingAndGlyphs" stroke="#151515" stroke-width="0.2">Sample Rate=100 MHz</text>
<text x="632.4" y="440.4" font-size="8.8" fill="#151515" textLength="29.4" lengthAdjust="spacingAndGlyphs" stroke="#151515" stroke-width="0.2">T=0.004</text>
<path d="M677.7 23 V445.5" stroke="#5f6670" stroke-width="1.4"/>
</svg>
</body></html>
